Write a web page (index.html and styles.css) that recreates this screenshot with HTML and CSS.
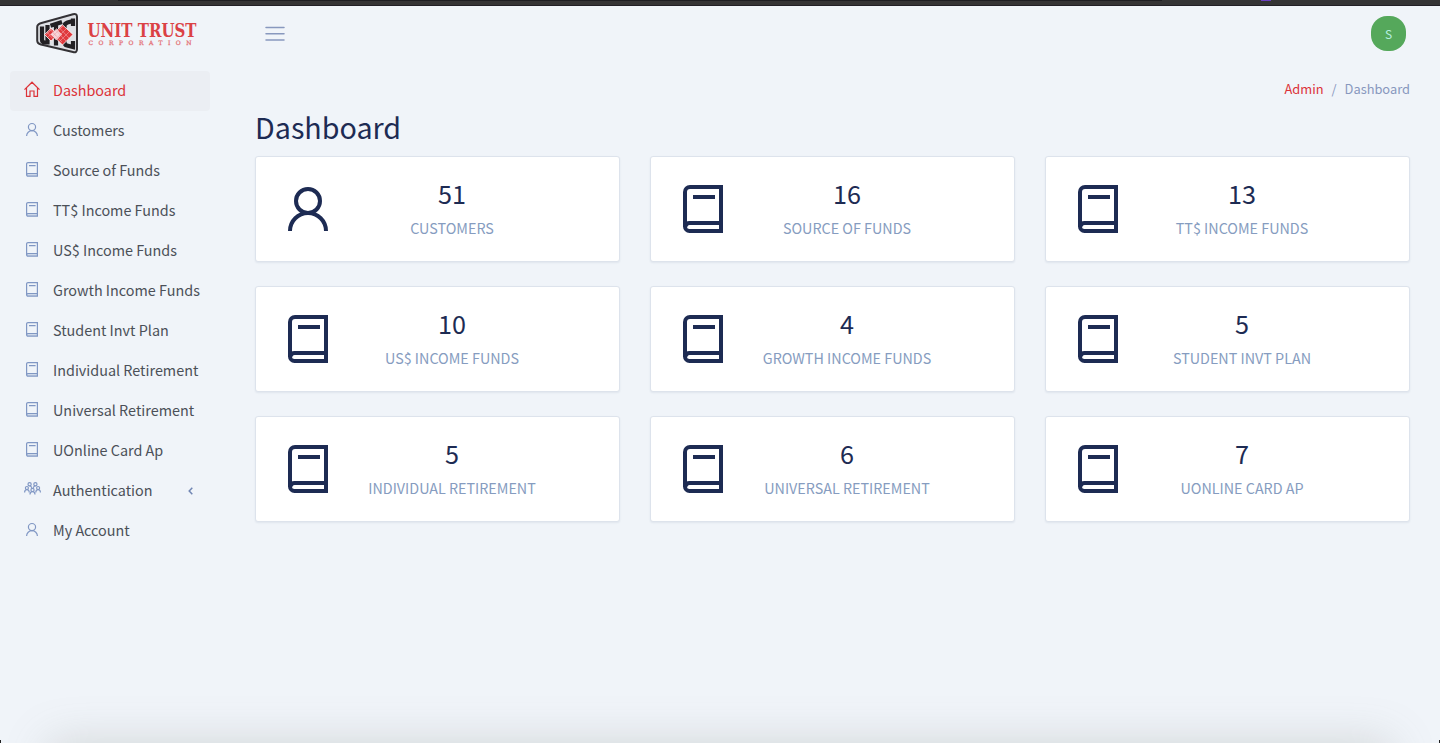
FILE: index.html
```html
<!DOCTYPE html>
<html lang="en">
<head>
<meta charset="utf-8">
<title>Dashboard</title>
<link rel="stylesheet" href="styles.css">
</head>
<body>
<svg class="sprite" aria-hidden="true">
  <symbol id="book" viewBox="0 0 40 48">
    <path fill="none" stroke="currentColor" stroke-width="4" d="M38 46H6.500A4.500 4.500 0 0 1 2 41.500V7A5 5 0 0 1 7 2H38ZM10 12H32M38 38H6.500A4 4 0 0 0 2.500 41.500"/>
  </symbol>
  <symbol id="book-small" viewBox="0 0 12 15">
    <path fill="none" stroke="currentColor" stroke-width="1.200" d="M11.400 14.200H2A1.400 1.400 0 0 1 .6 12.800V2A1.400 1.400 0 0 1 2 .6H11.400ZM3 3.600H9.600M11.400 11.500H2A1.200 1.200 0 0 0 .8 12.600"/>
    <path fill="currentColor" opacity=".3" d="M1 11.500H11V14H1Z"/>
  </symbol>
  <symbol id="user" viewBox="0 0 40 48">
    <path fill="none" stroke="currentColor" stroke-width="4" d="M2 46A18 18 0 0 1 38 46"/>
    <circle cx="20" cy="16" r="12" fill="none" stroke="currentColor" stroke-width="4"/>
  </symbol>
  <symbol id="home" viewBox="0 0 16 16">
    <path fill="none" stroke="currentColor" stroke-width="1.200" d="M.5 8.600L8 1.200L15.500 8.600M2.500 7V15.400H6V10H10V15.400H13.500V7"/>
  </symbol>
  <symbol id="group" viewBox="0 0 17 13">
    <g fill="none" stroke="currentColor" stroke-width="1.200">
      <circle cx="5.600" cy="2.300" r="1.600"/><circle cx="11.400" cy="2.300" r="1.600"/>
      <circle cx="2.900" cy="6" r="1.500"/><circle cx="14.100" cy="6" r="1.500"/><circle cx="8.500" cy="7.900" r="1.600"/>
      <path d="M.6 10.500Q.6 7.700 2.900 7.700T5.200 10.500M11.800 10.500Q11.800 7.700 14.100 7.700T16.400 10.500M6 12.600Q6 9.600 8.500 9.600T11 12.600M5.600 4Q7.400 4 7.700 5.800M11.400 4Q9.600 4 9.300 5.800"/>
    </g>
  </symbol>
</svg>

<div class="chrome"><span class="chrome-tab"></span><span class="chrome-mark"></span></div>

<header class="topbar">
  <a class="brand">
    <svg class="logo" viewBox="0 0 162 44">
      <path class="logo-frame" d="M5.500 11L37 2.200Q41 1.200 41 4.700V37.300Q41 41 37 40L5 32.500Q1.200 31.500 1.200 28.500V15Q1.200 12.200 5.500 11Z"/>
      <path class="logo-bar" d="M6 14.500V27.500Q6 30.500 9 30.500H11.500V13"/>
      <path class="logo-bar" d="M14.500 13.800L26 10M20 12V33.500"/>
      <path class="logo-bar" d="M37 6.500V14M37 9L31.500 10.500Q28.500 11.500 28.500 14V30Q28.500 33 31 33.500L37 35V29"/>
      <path class="logo-red" d="M8.500 22.500L15 16.300L19 20L26.500 12.800L37 22.500L26.500 33L19 25.500L15 29Z"/>
      <path class="logo-pale" d="M14.500 22.500L20.500 17L26 22.500L20.500 28Z"/>
      <path class="logo-grid" d="M11 20L17 27M14 17L20 24M20 18.500L30 29M23 15.500L33 26M17 20.500L26 30M27 14L17 24M30 17L19 28M33 20L23 30M21 16L12 25M16 17L10 23"/>
      <text class="logo-name" transform="translate(51.500 25) scale(1 1.080)" textLength="109" lengthAdjust="spacingAndGlyphs">UNIT TRUST</text>
      <text class="logo-sub" x="52.500" y="33.400" textLength="103">CORPORATION</text>
    </svg>
  </a>
  <svg class="burger" viewBox="0 0 20 16"><path d="M1 1.500H19M1 7.700H19M1 13.900H19"/></svg>
  <span class="avatar">S</span>
</header>

<div class="layout">
  <nav class="sidebar">
    <a class="item active"><svg class="ico home"><use href="#home"/></svg><span>Dashboard</span></a>
    <a class="item"><svg class="ico"><use href="#user"/></svg><span>Customers</span></a>
    <a class="item"><svg class="ico"><use href="#book-small"/></svg><span>Source of Funds</span></a>
    <a class="item"><svg class="ico"><use href="#book-small"/></svg><span>TT$ Income Funds</span></a>
    <a class="item"><svg class="ico"><use href="#book-small"/></svg><span>US$ Income Funds</span></a>
    <a class="item"><svg class="ico"><use href="#book-small"/></svg><span>Growth Income Funds</span></a>
    <a class="item"><svg class="ico"><use href="#book-small"/></svg><span>Student Invt Plan</span></a>
    <a class="item"><svg class="ico"><use href="#book-small"/></svg><span>Individual Retirement</span></a>
    <a class="item"><svg class="ico"><use href="#book-small"/></svg><span>Universal Retirement</span></a>
    <a class="item"><svg class="ico"><use href="#book-small"/></svg><span>UOnline Card Ap</span></a>
    <a class="item"><svg class="ico group"><use href="#group"/></svg><span>Authentication</span><svg class="caret" viewBox="0 0 5 8"><path d="M4.300 .8L1.200 4L4.300 7.200"/></svg></a>
    <a class="item"><svg class="ico"><use href="#user"/></svg><span>My Account</span></a>
  </nav>

  <main class="content">
    <div class="crumbs"><a>Admin</a><span class="sep">/</span><span>Dashboard</span></div>
    <h1>Dashboard</h1>
    <section class="cards">
      <article class="card"><svg class="big"><use href="#user"/></svg><div class="stat"><b>51</b><span>CUSTOMERS</span></div></article>
      <article class="card"><svg class="big"><use href="#book"/></svg><div class="stat"><b>16</b><span>SOURCE OF FUNDS</span></div></article>
      <article class="card"><svg class="big"><use href="#book"/></svg><div class="stat"><b>13</b><span>TT$ INCOME FUNDS</span></div></article>
      <article class="card"><svg class="big"><use href="#book"/></svg><div class="stat"><b>10</b><span>US$ INCOME FUNDS</span></div></article>
      <article class="card"><svg class="big"><use href="#book"/></svg><div class="stat"><b>4</b><span>GROWTH INCOME FUNDS</span></div></article>
      <article class="card"><svg class="big"><use href="#book"/></svg><div class="stat"><b>5</b><span>STUDENT INVT PLAN</span></div></article>
      <article class="card"><svg class="big"><use href="#book"/></svg><div class="stat"><b>5</b><span>INDIVIDUAL RETIREMENT</span></div></article>
      <article class="card"><svg class="big"><use href="#book"/></svg><div class="stat"><b>6</b><span>UNIVERSAL RETIREMENT</span></div></article>
      <article class="card"><svg class="big"><use href="#book"/></svg><div class="stat"><b>7</b><span>UONLINE CARD AP</span></div></article>
    </section>
  </main>
</div>
<div class="edge"></div>
</body>
</html>
```
FILE: styles.css
```css
* { box-sizing: border-box; }
body {
  margin: 0;
  height: 743px;
  overflow: hidden;
  background: #f0f4f9;
  color: #1d2b53;
  font-family: "Noto Sans CJK SC", "Noto Sans", sans-serif;
}
.sprite { position: absolute; width: 0; height: 0; }
.chrome {
  display: flex;
  height: 6px;
  background: #353435;
  border-bottom: 1px solid #221f26;
}
.chrome-tab { width: 1044px; height: 1px; margin-left: 118px; background: #1f1e22; }
.chrome-mark { width: 10px; height: 1px; margin-left: 99px; background: #6b3fc0; }

.topbar { display: flex; align-items: center; height: 55px; padding: 0 34px 0 36px; }
.brand { width: 229px; height: 44px; }
.logo { display: block; width: 162px; height: 44px; overflow: visible; }
.logo-frame { fill: #dfe1e6; stroke: #343236; stroke-width: 2; }
.logo-bar { fill: none; stroke: #222024; stroke-width: 4.2; }
.logo-red { fill: #e0393d; stroke: #fff; stroke-width: .8; }
.logo-pale { fill: #f6d5d9; }
.logo-grid { fill: none; stroke: #f1a5a9; stroke-width: .6; }
.logo-name { fill: #db4145; font: bold 17.5px "DejaVu Serif", serif; }
.logo-sub { fill: #e4777b; font: 6px "DejaVu Serif", serif; stroke: #e4777b; stroke-width: .3; }
.burger { width: 20px; height: 16px; fill: none; stroke: #8898be; stroke-width: 1.500; stroke-linecap: round; }
.avatar {
  width: 35px;
  height: 35px;
  margin-left: auto;
  border-radius: 16px;
  background: #55a85b;
  color: #b5efe0;
  font: 12px/36px "Noto Sans CJK SC", sans-serif;
  text-align: center;
}

.layout { display: flex; }
.sidebar { width: 220px; padding: 10px 10px 0; }
.item {
  display: flex;
  align-items: center;
  height: 40px;
  padding: 0 16px;
  border-radius: 4px;
  color: #4b5058;
  font-size: 14.380px;
  line-height: 38px;
  white-space: nowrap;
}
.item span { flex: none; height: 40px; }
.active { background: #ebeef3; color: #dc3238; }
.ico { flex: none; width: 12px; height: 15px; margin: -4px 15px 0 0; color: #8097c4; }
.ico.home { width: 16px; height: 16px; margin: -4px 13px 0 -2px; color: #dc3238; }
.ico.group { width: 17px; height: 13px; margin: -5px 12px 0 -2px; }
.caret { width: 5px; height: 8px; margin-left: 35px; fill: none; stroke: #7186b3; stroke-width: 1.500; }

.content { flex: 1; padding: 17px 30px 0 35px; }
.crumbs { display: flex; justify-content: flex-end; height: 22px; font-size: 12.850px; line-height: 22px; color: #8898be; }
.crumbs a { color: #dc3238; }
.sep { margin: 0 8px; }
h1 { height: 40px; margin: 7px 0 9px; font-size: 28.700px; line-height: 40px; font-weight: 400; }
.cards { display: grid; grid-template-columns: repeat(3, 365px); gap: 24px 30px; }
.card {
  display: flex;
  height: 106px;
  padding: 21px 32px 0;
  border: 1px solid #dde3ec;
  border-radius: 3px;
  background: #fff;
  box-shadow: 0 1px 2px rgba(40, 60, 100, .08);
}
.big { width: 40px; height: 48px; margin-top: 7px; flex: none; }
.stat { display: flex; flex-direction: column; width: 248px; align-items: center; flex: none; }
.stat b { height: 30px; font-size: 25.200px; line-height: 30px; font-weight: 400; }
.stat span { height: 24px; margin-top: 8px; font-size: 14.330px; line-height: 24px; color: #869cc0; white-space: nowrap; }

/* soft shade and rounded window corners along the bottom edge */
.edge {
  position: absolute;
  inset: 683px 0 0;
  overflow: hidden;
  background:
    linear-gradient(#222, #222) left bottom / 1px 3px no-repeat,
    linear-gradient(#222, #222) right bottom / 1px 3px no-repeat;
}
.edge::before {
  content: "";
  position: absolute;
  left: 58px;
  right: 58px;
  top: 68px;
  height: 80px;
  box-shadow: 0 0 45px 8px rgba(120, 125, 115, .25);
}
```
